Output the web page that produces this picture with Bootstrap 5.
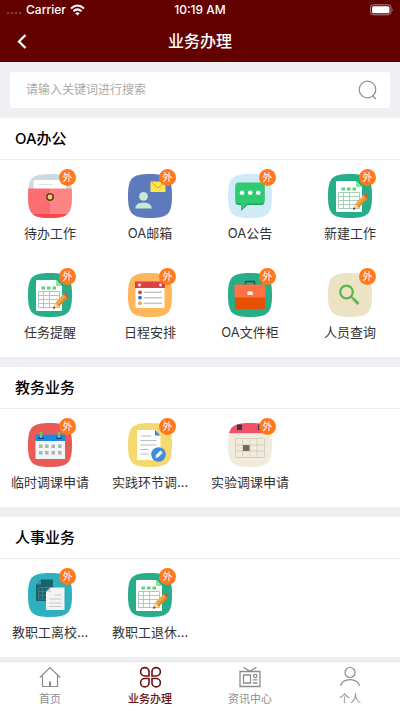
<!DOCTYPE html>
<html lang="zh-CN">
<head>
<meta charset="utf-8">
<meta name="viewport" content="width=device-width, initial-scale=1">
<title>业务办理</title>
<link href="https://cdn.jsdelivr.net/npm/bootstrap@5.3.0/dist/css/bootstrap.min.css" rel="stylesheet">
<style>
  body { background: #efeff4; font-family: Inter, "Noto Sans CJK SC", sans-serif; color: #333; }
  .app-head { background: #630000; }
  .status-bar { height: 20px; font-size: 12px; font-weight: 500; padding: 0 6px; }
  .signal { color: #94494a; font-weight: 700; }
  .title-bar { height: 42px; padding: 0 14px; }
  .title-bar h1 { font-size: 16px; font-weight: 500; line-height: 24px; }
  .icon-button { width: 16px; height: 24px; }
  .search-area { padding: 10px; }
  .search-box { height: 36px; padding: 0 12px 0 16px; border-radius: 4px; }
  .search-box input { font-size: 12px; outline: 0; color: #333; }
  .search-box input::placeholder { color: #aaa; }
  .section-list { gap: 10px; }
  .section-title { height: 42px; padding: 0 15px; font-size: 15px; font-weight: 500; color: #000; border-bottom: 1px solid #ededf0; }
  .app-grid { row-gap: 1px; }
  .app-link { height: 98px; padding-top: 14px; gap: 5px; color: #333; font-size: 13px; line-height: 20px; }
  .tile { width: 44px; height: 44px; }
  .tile svg { display: block; }
  .ext { top: -5px; right: -4px; width: 17px; height: 17px; background: #ff7a1c; font-size: 10px; line-height: 17px; }
  .tab-bar { border-top: 1px solid #e2e2e7; }
  .tab-link { height: 48px; padding-top: 4px; gap: 3px; color: #8c8c8c; font-size: 11px; line-height: 16px; }
  .tab-link.active { color: #6a1111; font-weight: 500; }
</style>
<script src="https://cdn.jsdelivr.net/npm/bootstrap@5.3.0/dist/js/bootstrap.bundle.min.js" defer></script>
</head>
<body class="d-flex flex-column min-vh-100">

<svg width="0" height="0" class="position-absolute" aria-hidden="true">
  <defs>
    <path id="tile-shape" d="M22 0C40 0 44 4 44 22S40 44 22 44 0 40 0 22 4 0 22 0Z"/>
    <clipPath id="tile-clip"><use href="#tile-shape"/></clipPath>
    <symbol id="sheet" viewBox="0 0 44 44">
      <use href="#tile-shape" fill="#27ad87"/>
      <path d="M9 7H28L34 13V37Q34 38 33 38H9Q8 38 8 37V8Q8 7 9 7Z" fill="#fff"/>
      <path d="M28 7 34 13H29Q28 13 28 12Z" fill="#8fe08f"/>
      <path d="M13.500 13.500h3.500v3h-3.500zM19 13.500h3.500v3h-3.500zM24.500 13.500h3.500v3h-3.500z" fill="#61cf75"/>
      <path d="M10.500 18.500H31.500V34.500H10.500ZM10.500 22.500H31.500M10.500 26.500H31.500M10.500 30.500H31.500M15.500 18.500V34.500M21.500 18.500V34.500" fill="none" stroke="#a5cbbb"/>
      <path d="M25.500 35.500 27 30 35.500 21 39.500 24.500 31 33.500Z" fill="#efa83f"/>
      <path d="M29.500 32 38 23 39.500 24.500 31 33.500Z" fill="#d88c2c"/>
      <path d="M35.500 21 37.500 19.500 40.500 22.500 39 25Z" fill="#e35247"/>
      <path d="M25.500 35.500 27 30 31 33.500Z" fill="#f6d7a1"/>
      <path d="M25 35.800 25.700 33.300 27.700 34.900Z" fill="#333"/>
    </symbol>
  </defs>
</svg>

<header class="app-head text-white">
  <div class="status-bar row g-0 align-items-center">
    <div class="col d-flex align-items-center gap-1">
      <span class="signal">....</span><span>Carrier</span>
      <svg width="15" height="12" viewBox="0 0 15 12" fill="none" stroke="#fff" stroke-width="2" aria-hidden="true"><path d="M1 4.500Q7.500-1.500 14 4.500M3.500 7.200Q7.500 3.600 11.500 7.200"/><path d="M5.200 9.300Q7.500 7.200 9.800 9.300L7.500 11.600Z" fill="#fff" stroke="none"/></svg>
    </div>
    <div class="col-auto">10:19 AM</div>
    <div class="col text-end lh-1">
      <svg width="24" height="12" viewBox="0 0 24 12" aria-hidden="true"><rect x=".5" y=".8" width="20.500" height="10" rx="3" fill="none" stroke="#b98080"/><rect x="2" y="2.300" width="17.500" height="7" rx="1.500" fill="#fff"/><path d="M22 4.200Q23.500 5.800 22 7.400Z" fill="#b98080"/></svg>
    </div>
  </div>
  <div class="title-bar d-flex align-items-center">
    <button type="button" class="icon-button btn p-0 border-0 d-flex align-items-center justify-content-center" aria-label="返回">
      <svg width="10" height="15" viewBox="0 0 10 15" fill="none" stroke="#fff" stroke-width="2.200"><path d="M8.500 1 2 7.500 8.500 14"/></svg>
    </button>
    <h1 class="flex-grow-1 text-center m-0">业务办理</h1>
    <span class="icon-button"></span>
  </div>
</header>

<main>
  <form class="search-area">
    <div class="search-box bg-white d-flex align-items-center">
      <input type="text" class="flex-grow-1 border-0 p-0 bg-transparent" placeholder="请输入关键词进行搜索" aria-label="搜索">
      <button type="button" class="btn p-0 border-0 d-flex" aria-label="查找">
        <svg width="20" height="20" viewBox="0 0 20 20" fill="none" stroke="#8f8f8f" stroke-width="1.200"><circle cx="9.500" cy="9.500" r="8.300"/><path d="M14.500 15.500 17.800 19"/></svg>
      </button>
    </div>
  </form>

  <div class="section-list d-flex flex-column">
  <section class="bg-white">
    <h2 class="section-title d-flex align-items-center m-0">OA办公</h2>
    <div class="app-grid row row-cols-4 g-0">
      <div class="col"><a href="#" class="app-link d-flex flex-column align-items-center text-decoration-none">
        <span class="tile position-relative">
          <svg width="44" height="44" viewBox="0 0 44 44"><g clip-path="url(#tile-clip)"><path d="M0 0H44V44H0Z" fill="#cbdadd"/><path d="M5.500 6H38V16H5.500Z" fill="#fff"/><path d="M10 10.500H25" stroke="#dce4e8"/><path d="M0 14.500H22V44H0Z" fill="#fb6d70"/><path d="M22 14.500H44V44H22Z" fill="#ff8585"/><path d="M0 40H44V44H0Z" fill="#f9484c"/></g><circle cx="22" cy="23" r="3.200" fill="#f7cd67" stroke="#5b4234" stroke-width="1.600"/></svg>
          <span class="ext position-absolute rounded-circle text-white text-center">外</span>
        </span>
        <span>待办工作</span></a></div>
      <div class="col"><a href="#" class="app-link d-flex flex-column align-items-center text-decoration-none">
        <span class="tile position-relative">
          <svg width="44" height="44" viewBox="0 0 44 44"><use href="#tile-shape" fill="#5c7abc"/><path d="M22.500 7.500H37.500V18H22.500Z" fill="#ffe651"/><path d="M23.500 8.500 30 14 36.500 8.500" fill="none" stroke="#e3a02c"/><circle cx="15.500" cy="22.300" r="4.400" fill="#c9e8d4"/><path d="M7.200 34.500Q7.500 28.500 15.500 28.500T23.800 34.500Z" fill="#c9e8d4"/></svg>
          <span class="ext position-absolute rounded-circle text-white text-center">外</span>
        </span>
        <span>OA邮箱</span></a></div>
      <div class="col"><a href="#" class="app-link d-flex flex-column align-items-center text-decoration-none">
        <span class="tile position-relative">
          <svg width="44" height="44" viewBox="0 0 44 44"><use href="#tile-shape" fill="#d0eaf8"/><path d="M10 9H33Q36.500 9 36.500 12.500V27.500Q36.500 31 33 31H19.500L13 37V31H10.500Q7.500 31 7.500 27.500V12.500Q7.500 9 10 9Z" fill="#22a35b"/><path d="M10 8.500H33Q36.500 8.500 36.500 12V26Q36.500 29.500 33 29.500H19L13 35.500V29.500H10.500Q7.500 29.500 7.500 26V12Q7.500 8.500 10 8.500Z" fill="#2ecc71"/><g fill="#fff"><circle cx="14" cy="18.800" r="2.300"/><circle cx="22.200" cy="18.800" r="2.300"/><circle cx="30.300" cy="18.800" r="2.300"/></g></svg>
          <span class="ext position-absolute rounded-circle text-white text-center">外</span>
        </span>
        <span>OA公告</span></a></div>
      <div class="col"><a href="#" class="app-link d-flex flex-column align-items-center text-decoration-none">
        <span class="tile position-relative">
          <svg width="44" height="44"><use href="#sheet"/></svg>
          <span class="ext position-absolute rounded-circle text-white text-center">外</span>
        </span>
        <span>新建工作</span></a></div>
      <div class="col"><a href="#" class="app-link d-flex flex-column align-items-center text-decoration-none">
        <span class="tile position-relative">
          <svg width="44" height="44"><use href="#sheet"/></svg>
          <span class="ext position-absolute rounded-circle text-white text-center">外</span>
        </span>
        <span>任务提醒</span></a></div>
      <div class="col"><a href="#" class="app-link d-flex flex-column align-items-center text-decoration-none">
        <span class="tile position-relative">
          <svg width="44" height="44" viewBox="0 0 44 44"><use href="#tile-shape" fill="#ffb55a"/><path d="M7.500 14H36.500V35H7.500Z" fill="#fff"/><path d="M7 8.500H37V15H7Z" fill="#dd4045"/><circle cx="11.500" cy="12" r="1.400" fill="#fff"/><circle cx="32.500" cy="12" r="1.400" fill="#fff"/><circle cx="12" cy="19.300" r="1.900" fill="#d93a40"/><circle cx="12" cy="24.700" r="1.900" fill="#2b73bb"/><circle cx="12" cy="30.200" r="1.900" fill="#f5a742"/><path d="M15.500 19.300H34M15.500 24.700H34M15.500 30.200H34" stroke="#c3c7ca" stroke-width="1.400"/></svg>
          <span class="ext position-absolute rounded-circle text-white text-center">外</span>
        </span>
        <span>日程安排</span></a></div>
      <div class="col"><a href="#" class="app-link d-flex flex-column align-items-center text-decoration-none">
        <span class="tile position-relative">
          <svg width="44" height="44" viewBox="0 0 44 44"><use href="#tile-shape" fill="#27ad87"/><path d="M17.500 12V9.500Q17.500 8.500 18.500 8.500H25.500Q26.500 8.500 26.500 9.500V12" fill="none" stroke="#36474f" stroke-width="1.500"/><path d="M7 24H37V35Q37 36 36 36H8Q7 36 7 35Z" fill="#e65100"/><path d="M7.500 11.500H36.500Q37.500 11.500 37.500 12.500V23.500Q37.500 24.500 36.500 24.500H7.500Q6.500 24.500 6.500 23.500V12.500Q6.500 11.500 7.500 11.500Z" fill="#ff7043"/><rect x="19.300" y="18.500" width="5.500" height="3.600" rx="1.200" fill="#fff3e0"/></svg>
          <span class="ext position-absolute rounded-circle text-white text-center">外</span>
        </span>
        <span>OA文件柜</span></a></div>
      <div class="col"><a href="#" class="app-link d-flex flex-column align-items-center text-decoration-none">
        <span class="tile position-relative">
          <svg width="44" height="44" viewBox="0 0 44 44" fill="none"><use href="#tile-shape" fill="#ece3c5"/><circle cx="18.500" cy="19" r="6.300" stroke="#5bb450" stroke-width="2.200"/><path d="M23 23.500 25.500 26" stroke="#5bb450" stroke-width="2"/><path d="M25.500 26 30.500 31" stroke="#5bb450" stroke-width="2.800"/></svg>
          <span class="ext position-absolute rounded-circle text-white text-center">外</span>
        </span>
        <span>人员查询</span></a></div>
    </div>
  </section>

  <section class="bg-white">
    <h2 class="section-title d-flex align-items-center m-0">教务业务</h2>
    <div class="app-grid row row-cols-4 g-0">
      <div class="col"><a href="#" class="app-link d-flex flex-column align-items-center text-decoration-none">
        <span class="tile position-relative">
          <svg width="44" height="44" viewBox="0 0 44 44"><use href="#tile-shape" fill="#ea5a54"/><path d="M7.500 17H37V36H7.500Z" fill="#f2f5f7"/><path d="M8.500 11.500H36Q37 11.500 37 12.500V18H7.500V12.500Q7.500 11.500 8.500 11.500Z" fill="#1e88e5"/><path d="M10.500 14H15.500V16H10.500ZM28.500 14H33.500V16H28.500Z" fill="#1a4167"/><path d="M13 9V15M31 9V15" stroke="#6fc562" stroke-width="2.400"/><path d="M11 21.500h3.500v3.500H11zM17 21.500h3.500v3.500H17zM23.500 21.500H27v3.500h-3.500zM30 21.500h3.500v3.500H30zM11 28h3.500v3.500H11zM17 28h3.500v3.500H17zM23.500 28H27v3.500h-3.500zM30 28h3.500v3.500H30z" fill="#b0b1b5"/></svg>
          <span class="ext position-absolute rounded-circle text-white text-center">外</span>
        </span>
        <span>临时调课申请</span></a></div>
      <div class="col"><a href="#" class="app-link d-flex flex-column align-items-center text-decoration-none">
        <span class="tile position-relative">
          <svg width="44" height="44" viewBox="0 0 44 44"><use href="#tile-shape" fill="#f4d870"/><path d="M9.500 7H27L32.500 12.500V37H9.500Q9 37 9 36.500V7.500Q9 7 9.500 7Z" fill="#fff"/><path d="M27 7 32.500 12.500H27Z" fill="#3e86d8"/><path d="M12.500 13H23M12.500 17.500H28.500M12.500 22H28.500M12.500 26.500H20.500M12.500 31H20.500" stroke="#b7bbbf" stroke-width="1.100"/><circle cx="30.500" cy="31.500" r="7.300" fill="#428bdc"/><path d="M27.500 35 28 32 32.500 27.500 34.700 29.700 30.200 34.200Z" fill="#fff"/></svg>
          <span class="ext position-absolute rounded-circle text-white text-center">外</span>
        </span>
        <span>实践环节调…</span></a></div>
      <div class="col"><a href="#" class="app-link d-flex flex-column align-items-center text-decoration-none">
        <span class="tile position-relative">
          <svg width="44" height="44" viewBox="0 0 44 44"><g clip-path="url(#tile-clip)"><path d="M0 0H44V44H0Z" fill="#f0ebdc"/><path d="M0 0H44V10.500H0Z" fill="#ef5267"/><path d="M0 10.500H44" stroke="#ddd8c8"/><path d="M9 1.500H14V7H9ZM30 1.500H35V7H30Z" fill="#2f3e55"/></g><path d="M7.500 15.500H36.500V34.500H7.500ZM7.500 22H36.500M7.500 28H36.500M14.500 15.500V34.500M22 15.500V34.500M29 15.500V34.500" fill="none" stroke="#d6d0bb"/><path d="M15 22H21.500V28H15Z" fill="#7b6756"/></svg>
          <span class="ext position-absolute rounded-circle text-white text-center">外</span>
        </span>
        <span>实验调课申请</span></a></div>
    </div>
  </section>

  <section class="bg-white">
    <h2 class="section-title d-flex align-items-center m-0">人事业务</h2>
    <div class="app-grid row row-cols-4 g-0">
      <div class="col"><a href="#" class="app-link d-flex flex-column align-items-center text-decoration-none">
        <span class="tile position-relative">
          <svg width="44" height="44" viewBox="0 0 44 44"><use href="#tile-shape" fill="#2eb0bf"/><path d="M13 6.500H25V28H8V11.500Z" fill="#16646d"/><path d="M8 11.500 13 6.500V11.500Z" fill="#40939b"/><path d="M10.500 14.500H22.500V26H10.500ZM10.500 18.500H22.500M10.500 22.500H22.500M14.500 14.500V26M18.500 14.500V26" fill="none" stroke="#398087"/><path d="M22.500 14.500H36.500V37H18V19Z" fill="#f4f4f4"/><path d="M18 19 22.500 14.500V19Z" fill="#cbced0"/><path d="M27 22H33.500M21 26H33.500M21 30H33.500M21 33.500H33.500" stroke="#c9c9c9"/></svg>
          <span class="ext position-absolute rounded-circle text-white text-center">外</span>
        </span>
        <span>教职工离校…</span></a></div>
      <div class="col"><a href="#" class="app-link d-flex flex-column align-items-center text-decoration-none">
        <span class="tile position-relative">
          <svg width="44" height="44"><use href="#sheet"/></svg>
          <span class="ext position-absolute rounded-circle text-white text-center">外</span>
        </span>
        <span>教职工退休…</span></a></div>
    </div>
  </section>
  </div>
</main>

<nav class="tab-bar bg-white mt-auto sticky-bottom" aria-label="主导航">
  <div class="row row-cols-4 g-0">
    <div class="col"><a href="#" class="tab-link d-flex flex-column align-items-center text-decoration-none">
      <svg width="22" height="22" viewBox="0 0 22 22" fill="none" stroke="currentColor" stroke-width="1.200"><path d="M.8 11.500 11 1.500 21.200 11.500M3.500 9.500V20.500H18.500V9.500"/><path d="M10 15.500H12V20.500H10Z" fill="currentColor" stroke="none"/></svg>
      <span>首页</span></a></div>
    <div class="col"><a href="#" class="tab-link active d-flex flex-column align-items-center text-decoration-none" aria-current="page">
      <svg width="22" height="22" viewBox="0 0 22 22" fill="none" stroke="currentColor" stroke-width="1.600"><path d="M10 10H5.800A4.200 4.200 0 1 1 10 5.800ZM13 10V5.800A4.200 4.200 0 1 1 17.200 10ZM10 12.500V16.700A4.200 4.200 0 1 1 5.800 12.500ZM13 12.500H17.200A4.200 4.200 0 1 1 13 16.700Z"/></svg>
      <span>业务办理</span></a></div>
    <div class="col"><a href="#" class="tab-link d-flex flex-column align-items-center text-decoration-none">
      <svg width="22" height="22" viewBox="0 0 22 22" fill="none" stroke="currentColor" stroke-width="1.300"><path d="M1 5.500H21V20.500H1ZM4.500 9H11.500V17H4.500ZM4.500 1.200 11 5.200 17.500 1.200M13.800 13.800H18.500M13.800 17H18.500"/><circle cx="16.200" cy="10" r="1.700"/></svg>
      <span>资讯中心</span></a></div>
    <div class="col"><a href="#" class="tab-link d-flex flex-column align-items-center text-decoration-none">
      <svg width="22" height="22" viewBox="0 0 22 22" fill="none" stroke="currentColor" stroke-width="1.200"><circle cx="11" cy="6.500" r="5"/><path d="M1.500 20C2.500 11.500 19.500 11.500 20.500 20"/></svg>
      <span>个人</span></a></div>
  </div>
</nav>
</body>
</html>
